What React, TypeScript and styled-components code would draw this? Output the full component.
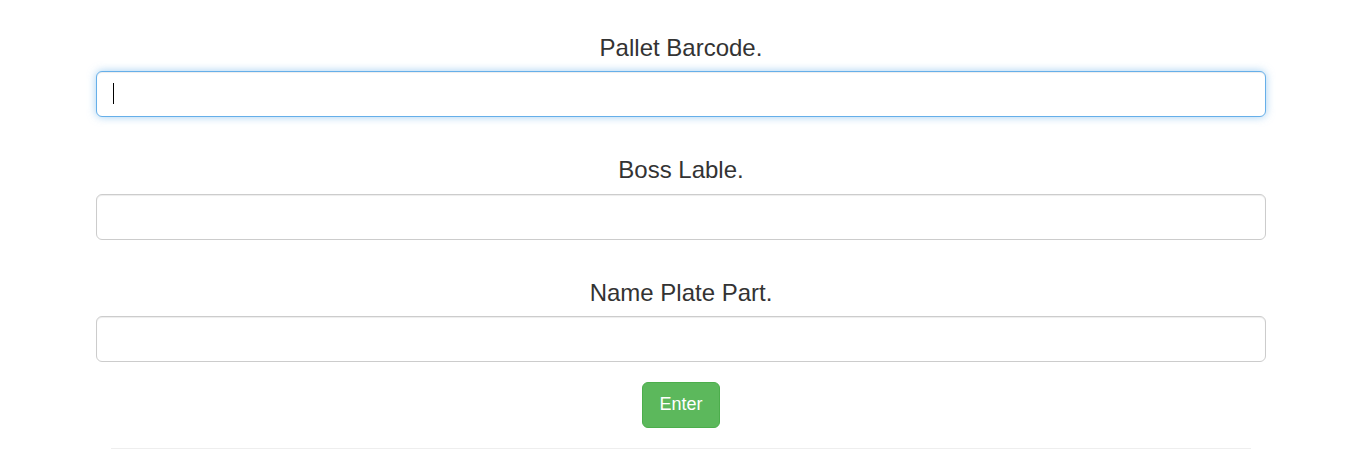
import React from "react";
import styled, { createGlobalStyle, css } from "styled-components";

const GlobalStyle = createGlobalStyle`
  html, body {
    margin: 0;
    padding: 0;
    background: #fff;
  }
  body {
    padding-right: 1px;
    font-family: "Liberation Sans", Arial, Helvetica, sans-serif;
    font-size: 14px;
    color: #333;
  }
  * {
    box-sizing: border-box;
  }
`;

const fields = [
  { label: "Pallet Barcode.", focused: true },
  { label: "Boss Lable.", focused: false },
  { label: "Name Plate Part.", focused: false },
];

export default function App() {
  return (
    <>
      <GlobalStyle />
      <Page>
        <Form onSubmit={(e) => e.preventDefault()}>
          {fields.map((f) => (
            <Group key={f.label}>
              <Label>{f.label}</Label>
              <InputWrap>
                <Input type="text" $focused={f.focused} />
                {f.focused && <Caret />}
              </InputWrap>
            </Group>
          ))}
          <ButtonRow>
            <EnterButton type="submit">Enter</EnterButton>
          </ButtonRow>
          <Rule />
        </Form>
      </Page>
    </>
  );
}

const Page = styled.div`
  width: 1170px;
  margin: 0 auto;
  padding-top: 35px;
`;

const Form = styled.form`
  display: flex;
  flex-direction: column;
`;

const Group = styled.div`
  display: flex;
  flex-direction: column;
  & + & {
    margin-top: 40px;
  }
`;

const Label = styled.h3`
  margin: 0 0 10px;
  font-size: 24px;
  font-weight: 400;
  line-height: 26.4px;
  text-align: center;
  color: #333;
`;

const InputWrap = styled.div`
  position: relative;
`;

const Input = styled.input<{ $focused?: boolean }>`
  display: block;
  width: 100%;
  height: 46px;
  padding: 10px 16px;
  font-family: inherit;
  font-size: 18px;
  color: #555;
  background: #fff;
  border: 1px solid #ccc;
  border-radius: 6px;
  box-shadow: inset 0 1px 1px rgba(0, 0, 0, 0.075);
  outline: none;
  ${(p) =>
    p.$focused &&
    css`
      border-color: #66afe9;
      box-shadow: inset 0 1px 1px rgba(0, 0, 0, 0.075),
        0 0 8px rgba(102, 175, 233, 0.6);
    `}
`;

const Caret = styled.span`
  position: absolute;
  left: 17px;
  top: 12px;
  width: 1px;
  height: 21px;
  background: #000;
`;

const ButtonRow = styled.div`
  display: flex;
  justify-content: center;
  margin-top: 20px;
`;

const EnterButton = styled.button`
  height: 46px;
  padding: 10px 16px;
  font-family: inherit;
  font-size: 18px;
  line-height: 1.3333;
  color: #fff;
  background: #5cb85c;
  border: 1px solid #4cae4c;
  border-radius: 6px;
  cursor: pointer;
`;

const Rule = styled.hr`
  width: 1140px;
  margin: 20px auto 0;
  border: 0;
  border-top: 1px solid #eee;
`;
